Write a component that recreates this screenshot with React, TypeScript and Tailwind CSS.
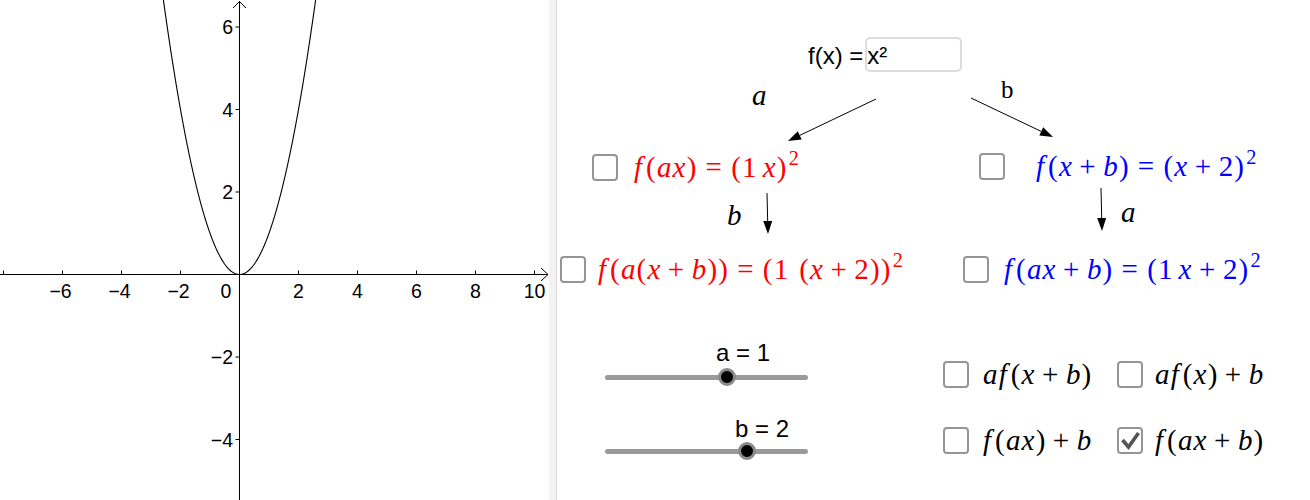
import React from "react";

const SANS = "font-['Liberation_Sans',Arial,sans-serif]";
const SERIF = "font-['Liberation_Serif','Times_New_Roman',serif]";

function Graph() {
  const ox = 239.5;
  const oy = 274.5;
  const sx = 29.5;
  const sy = 41.25;
  const pts: string[] = [];
  for (let i = -262; i <= 262; i++) {
    const x = i / 100;
    pts.push(`${(ox + x * sx).toFixed(2)},${(oy - x * x * sy).toFixed(2)}`);
  }
  const xt = [-8, -6, -4, -2, 2, 4, 6, 8, 10];
  const yt = [6, 4, 2, -2, -4];
  const fmt = (n: number) => (n < 0 ? `\u2212${-n}` : `${n}`);
  return (
    <svg width="549" height="500" className="block shrink-0">
      <polyline points={pts.join(" ")} fill="none" stroke="#000" strokeWidth="1.1" />
      <line x1="0" y1={oy} x2="548" y2={oy} stroke="#000" strokeWidth="1" />
      <line x1={ox} y1="1" x2={ox} y2="500" stroke="#000" strokeWidth="1" />
      <polyline points={`541,268 548,${oy} 541,281`} fill="none" stroke="#000" strokeWidth="1" />
      <polyline points={`233,8 ${ox},1.5 246,8`} fill="none" stroke="#000" strokeWidth="1" />
      {xt.map((n) => (
        <line key={`xt${n}`} x1={ox + n * sx} y1={oy - 4} x2={ox + n * sx} y2={oy} stroke="#000" strokeWidth="1" />
      ))}
      {yt.map((n) => (
        <line key={`yt${n}`} x1={ox - 4} y1={oy - n * sy} x2={ox} y2={oy - n * sy} stroke="#000" strokeWidth="1" />
      ))}
      <g fontFamily="'Liberation Sans', Arial, sans-serif" fontSize="19.5" fill="#000">
        {xt
          .filter((n) => n !== -8)
          .map((n) => (
            <text key={`xl${n}`} x={ox + n * sx + (n < 0 ? -2 : 0)} y={298} textAnchor="middle">
              {fmt(n)}
            </text>
          ))}
        <text x={226} y={298} textAnchor="middle">0</text>
        {yt.map((n) => (
          <text key={`yl${n}`} x={233} y={oy - n * sy + 7} textAnchor="end">
            {fmt(n)}
          </text>
        ))}
      </g>
    </svg>
  );
}

function MathText({ s, color }: { s: string; color: string }) {
  const out: React.ReactNode[] = [];
  for (let i = 0; i < s.length; i++) {
    const c = s[i];
    if (c === "^") {
      out.push(
        <sup key={i} className="text-[0.7em] -top-[0.6em] ml-[0.06em]">
          {s[i + 1]}
        </sup>
      );
      i++;
    } else if (c === "f") {
      out.push(
        <i key={i} className="pr-[0.1em]">
          f
        </i>
      );
    } else if (/[a-z]/.test(c)) {
      out.push(<i key={i}>{c}</i>);
    } else if (c === "+") {
      out.push(
        <span key={i} className="mx-[0.22em]">
          +
        </span>
      );
    } else if (c === "=") {
      out.push(
        <span key={i} className="mx-[0.28em]">
          =
        </span>
      );
    } else if (c === " ") {
      out.push(<span key={i} className="inline-block w-[0.17em]" />);
    } else {
      out.push(<span key={i}>{c}</span>);
    }
  }
  return (
    <span className={`${SERIF} text-[29px] leading-none tracking-[0.04em] whitespace-nowrap ${color}`}>{out}</span>
  );
}

function Checkbox({ checked }: { checked?: boolean }) {
  return (
    <div className="w-[26px] h-[27px] shrink-0 rounded-[4px] border-2 border-[#959595] bg-white flex items-center justify-center">
      {checked && (
        <svg width="22" height="23" viewBox="0 0 22 23">
          <path d="M3.5 11 L9.5 18 L19.5 4" fill="none" stroke="#555" strokeWidth="3.6" />
        </svg>
      )}
    </div>
  );
}

function Arrow({ x1, y1, x2, y2 }: { x1: number; y1: number; x2: number; y2: number }) {
  const dx = x2 - x1;
  const dy = y2 - y1;
  const len = Math.hypot(dx, dy);
  const ux = dx / len;
  const uy = dy / len;
  const L = 13;
  const W = 4.5;
  const bx = x2 - ux * L;
  const by = y2 - uy * L;
  const px = -uy;
  const py = ux;
  return (
    <g>
      <line x1={x1} y1={y1} x2={bx} y2={by} stroke="#000" strokeWidth="1" />
      <polygon points={`${x2},${y2} ${bx + px * W},${by + py * W} ${bx - px * W},${by - py * W}`} fill="#000" />
    </g>
  );
}

function Knob() {
  return <div className="w-[18px] h-[18px] rounded-full bg-black border-[3px] border-[#8a8a8a]" />;
}

export default function App() {
  return (
    <div className="w-[1310px] h-[500px] flex bg-white overflow-hidden text-black">
      <Graph />
      <div className="w-[8px] h-[500px] shrink-0 bg-[#f3f3f3] border-r border-[#d8d8d8]" />
      <div className="relative flex-1 h-[500px] bg-white">
        <svg className="absolute inset-0" width="753" height="500">
          <Arrow x1={319} y1={99} x2={231} y2={141} />
          <Arrow x1={414} y1={98} x2={496} y2={137} />
          <Arrow x1={210} y1={193} x2={211} y2={234} />
          <Arrow x1={544} y1={188} x2={545} y2={231} />
        </svg>

        <div className="absolute left-[251px] top-[37px] flex items-center gap-[2px]">
          <span className={`${SANS} text-[24px] leading-none mt-[3px]`}>f(x) =</span>
          <div className="w-[97px] h-[35px] rounded-[5px] border-2 border-[#dcdcdc] flex items-center">
            <span className={`${SANS} text-[24px] leading-none mt-[3px]`}>x²</span>
          </div>
        </div>

        <span className={`absolute left-[195px] top-[81px] ${SERIF} italic text-[29px] leading-none`}>a</span>
        <span className={`absolute left-[444px] top-[77px] ${SERIF} text-[25px] leading-none`}>b</span>
        <span className={`absolute left-[170px] top-[201px] ${SERIF} italic text-[29px] leading-none`}>b</span>
        <span className={`absolute left-[564px] top-[198px] ${SERIF} italic text-[29px] leading-none`}>a</span>

        <div className="absolute left-[35px] top-[153px] flex items-center gap-[16px]">
          <Checkbox />
          <MathText s="f(ax)=(1 x)^2" color="text-[#ff0000]" />
        </div>
        <div className="absolute left-[422px] top-[152px] flex items-center gap-[31px]">
          <Checkbox />
          <MathText s="f(x+b)=(x+2)^2" color="text-[#0000ff]" />
        </div>
        <div className="absolute left-[3px] top-[255px] flex items-center gap-[12px]">
          <Checkbox />
          <MathText s="f(a(x+b))=(1  (x+2))^2" color="text-[#ff0000]" />
        </div>
        <div className="absolute left-[406px] top-[255px] flex items-center gap-[15px]">
          <Checkbox />
          <MathText s="f(ax+b)=(1 x+2)^2" color="text-[#0000ff]" />
        </div>

        <div className="absolute left-[48px] top-[341px] w-[203px] flex flex-col">
          <span className={`${SANS} text-[24px] leading-none pl-[111px]`}>a = 1</span>
          <div className="relative h-[18px] mt-[3px]">
            <div className="absolute left-0 right-0 top-[6.5px] h-[5px] rounded-full bg-[#9a9a9a]" />
            <div className="absolute top-0 left-[113px]">
              <Knob />
            </div>
          </div>
        </div>
        <div className="absolute left-[48px] top-[417px] w-[203px] flex flex-col">
          <span className={`${SANS} text-[24px] leading-none pl-[130px]`}>b = 2</span>
          <div className="relative h-[18px] mt-[1px]">
            <div className="absolute left-0 right-0 top-[6.5px] h-[5px] rounded-full bg-[#9a9a9a]" />
            <div className="absolute top-0 left-[133px]">
              <Knob />
            </div>
          </div>
        </div>

        <div className="absolute left-[386px] top-[360px] grid grid-cols-[174px_auto] gap-y-[37px]">
          <div className="flex items-center gap-[14px]">
            <Checkbox />
            <MathText s="af(x+b)" color="text-black" />
          </div>
          <div className="flex items-center gap-[12px]">
            <Checkbox />
            <MathText s="af(x)+b" color="text-black" />
          </div>
          <div className="flex items-center gap-[14px]">
            <Checkbox />
            <MathText s="f(ax)+b" color="text-black" />
          </div>
          <div className="flex items-center gap-[12px]">
            <Checkbox checked />
            <MathText s="f(ax+b)" color="text-black" />
          </div>
        </div>
      </div>
    </div>
  );
}
